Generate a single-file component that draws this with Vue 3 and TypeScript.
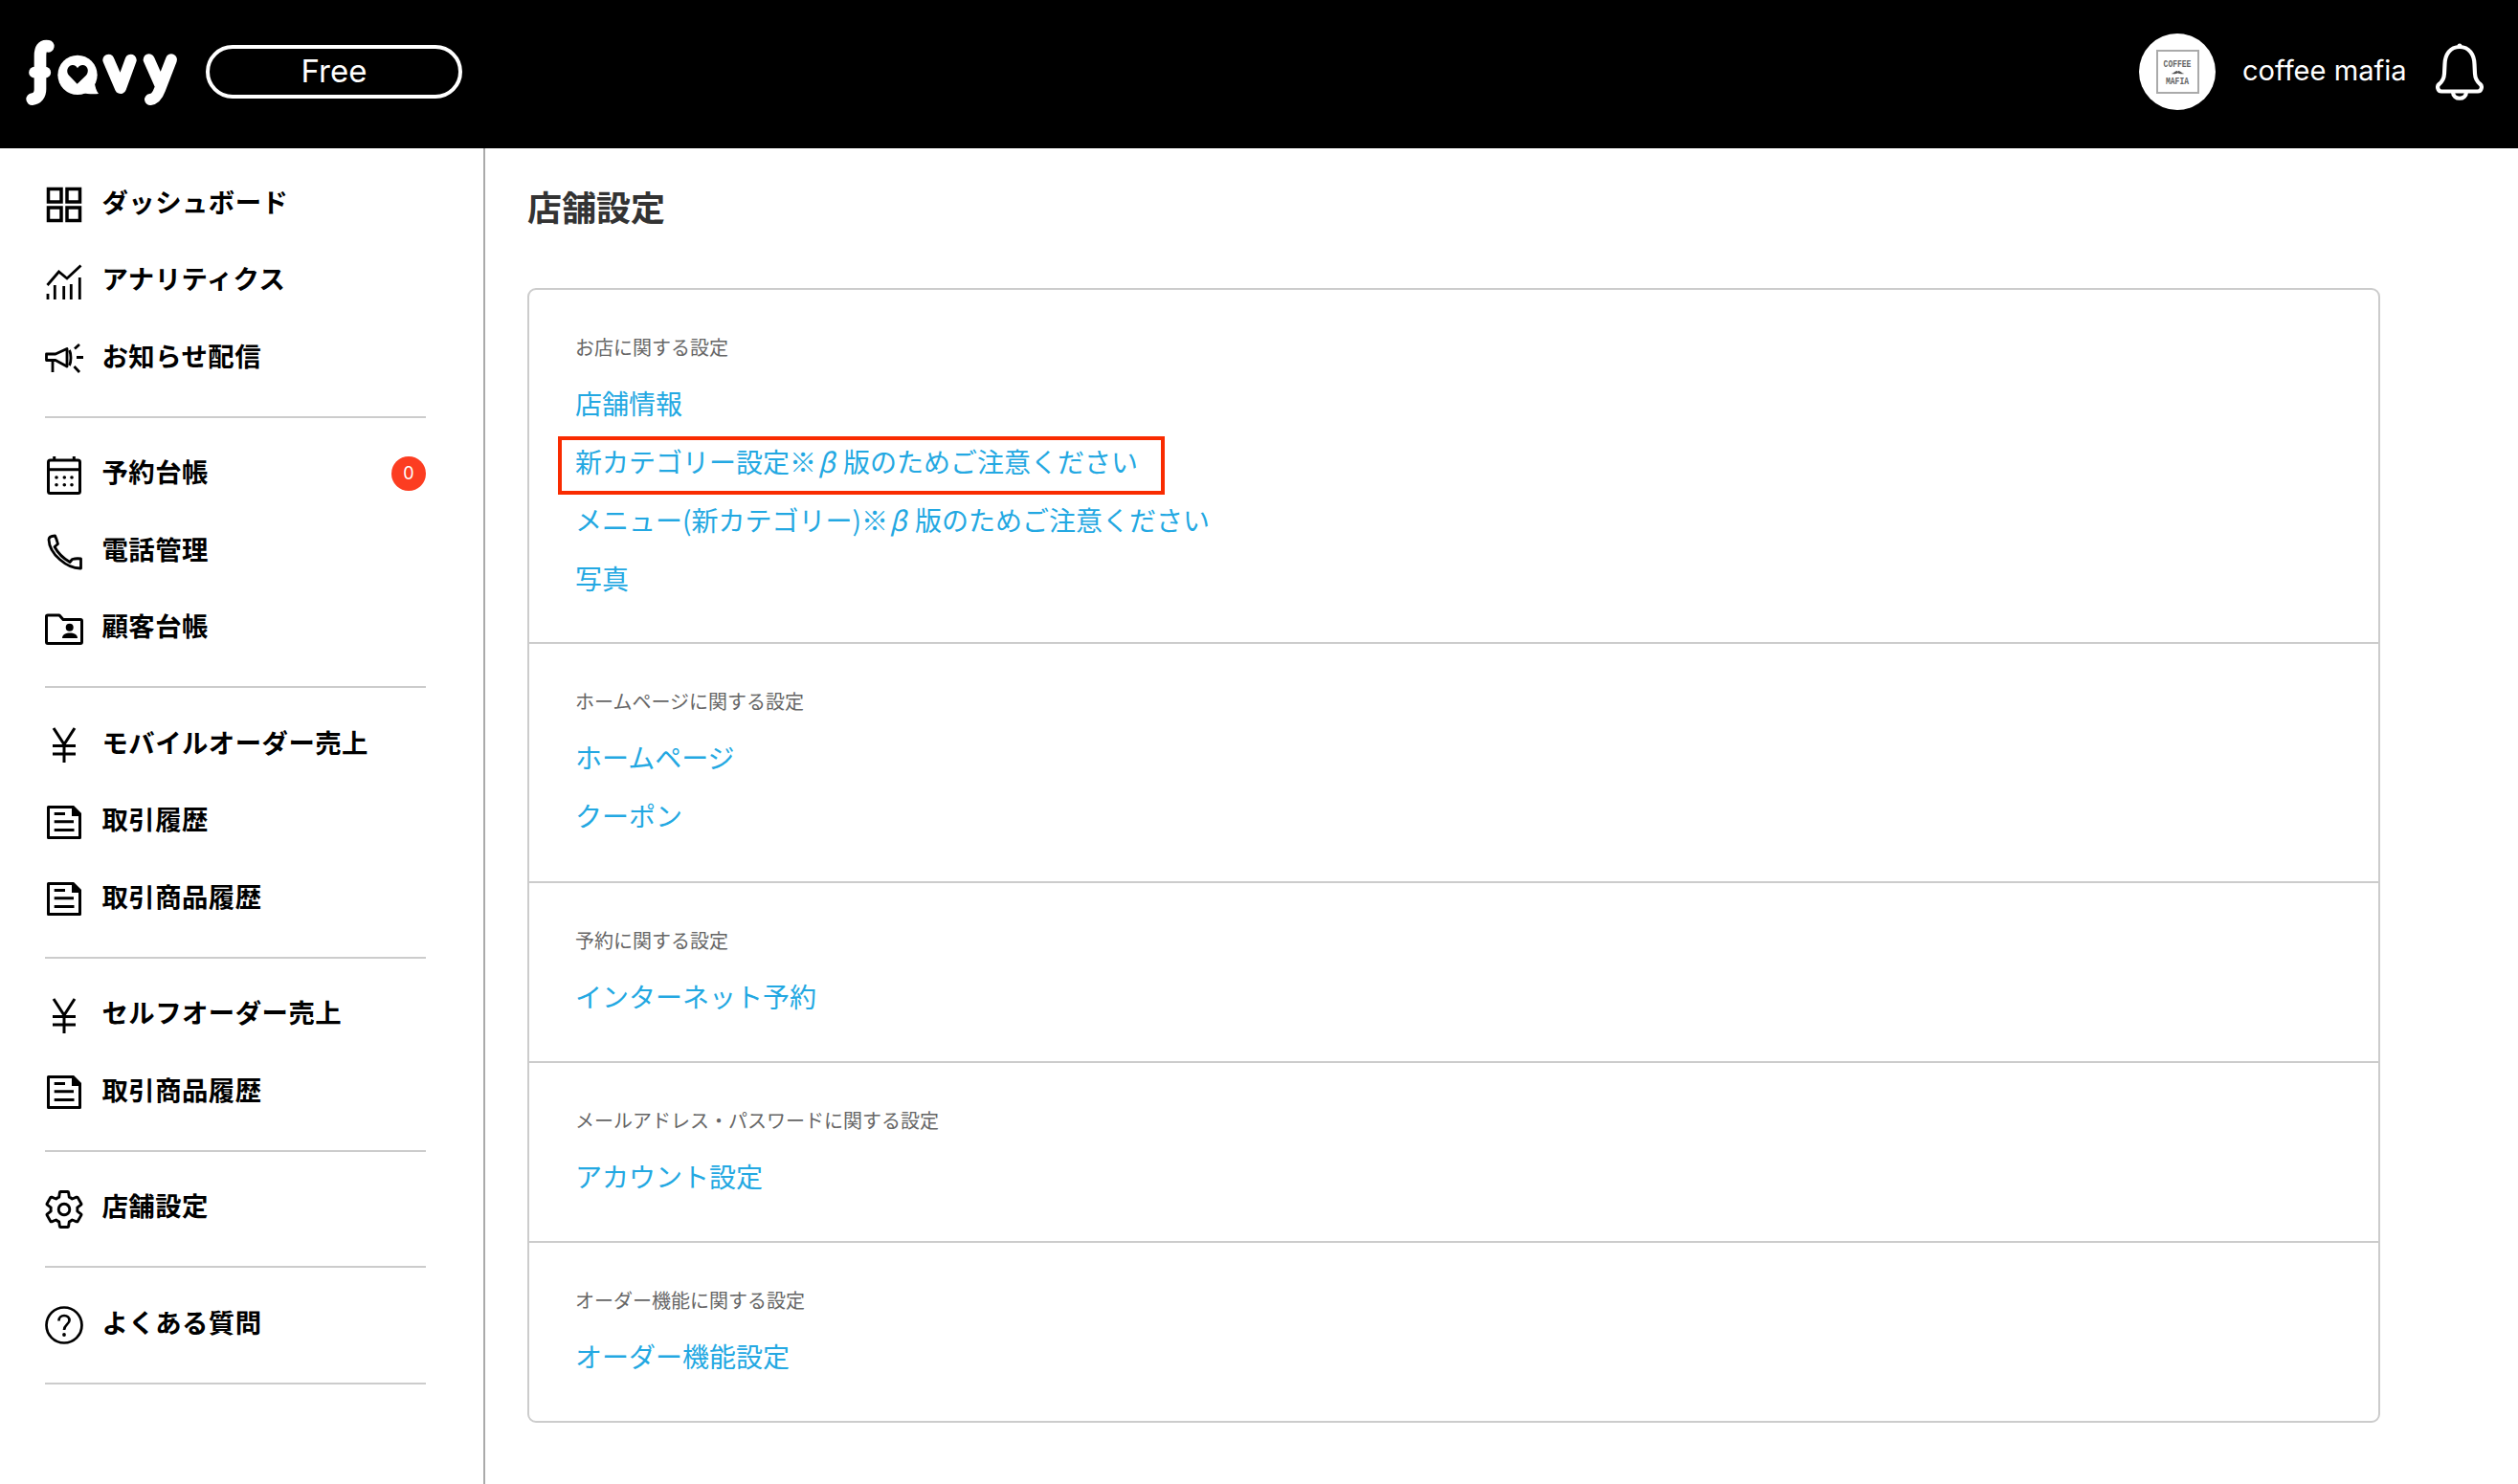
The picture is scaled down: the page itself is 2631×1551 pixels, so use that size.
<script setup lang="ts">
interface NavItem { label: string; icon: string; badge?: number }

const groups: NavItem[][] = [
  [
    { label: 'ダッシュボード', icon: 'grid' },
    { label: 'アナリティクス', icon: 'chart' },
    { label: 'お知らせ配信', icon: 'mega' },
  ],
  [
    { label: '予約台帳', icon: 'calendar', badge: 0 },
    { label: '電話管理', icon: 'phone' },
    { label: '顧客台帳', icon: 'folder' },
  ],
  [
    { label: 'モバイルオーダー売上', icon: 'yen' },
    { label: '取引履歴', icon: 'doc' },
    { label: '取引商品履歴', icon: 'doc' },
  ],
  [
    { label: 'セルフオーダー売上', icon: 'yen' },
    { label: '取引商品履歴', icon: 'doc' },
  ],
  [{ label: '店舗設定', icon: 'gear' }],
  [{ label: 'よくある質問', icon: 'help' }],
]

interface Section { title: string; links: { text: string; marked?: boolean }[] }

const sections: Section[] = [
  {
    title: 'お店に関する設定',
    links: [
      { text: '店舗情報' },
      { text: '新カテゴリー設定※β版のためご注意ください', marked: true },
      { text: 'メニュー(新カテゴリー)※β版のためご注意ください' },
      { text: '写真' },
    ],
  },
  { title: 'ホームページに関する設定', links: [{ text: 'ホームページ' }, { text: 'クーポン' }] },
  { title: '予約に関する設定', links: [{ text: 'インターネット予約' }] },
  { title: 'メールアドレス・パスワードに関する設定', links: [{ text: 'アカウント設定' }] },
  { title: 'オーダー機能に関する設定', links: [{ text: 'オーダー機能設定' }] },
]
</script>

<template>
  <div class="page">
    <header class="topbar">
      <div class="brand">
        <svg class="logo" viewBox="0 0 540 270" width="180" height="90" aria-label="favy">
          <g fill="none" stroke="#fff" stroke-linecap="round" stroke-linejoin="round">
            <path stroke-width="38" d="M91 55C72 52 66 64 66 85V190C66 208 56 220 41 221" />
            <path stroke-width="35" d="M48 137H82" />
            <path stroke-width="36" d="M280 98L318 186L350 98" />
            <path stroke-width="36" d="M407 97L442 176M477 97L441 190C433 212 425 220 411 222" />
          </g>
          <circle cx="183" cy="145" r="62" fill="#fff" />
          <path fill="#fff" d="M236 165C238 182 241 194 249 204C232 206 214 205 196 200Z" />
          <path fill="#000" d="M182 173L156 146C146 135 151 116 166 114C174 113 180 118 183 124C186 118 193 113 201 114C216 116 220 135 210 146Z" />
        </svg>
        <div class="plan"><span class="plan-text">Free</span></div>
      </div>
      <div class="account">
        <div class="avatar">
          <div class="avatar-mark">
            <span>COFFEE</span>
            <svg viewBox="0 0 20 6" width="15" height="5">
              <path fill="#555" d="M1 5C4 5 6 1 9 1L10 2L11 1C14 1 16 5 19 5C15 6 12 5 10 4C8 5 5 6 1 5Z" />
            </svg>
            <span>MAFIA</span>
          </div>
        </div>
        <span class="account-name">coffee mafia</span>
        <svg class="bell" viewBox="0 0 50 60" width="50" height="60" fill="none" stroke="#fff" stroke-width="4.2">
          <path stroke-linejoin="round" d="M25 4C15 4 9.8 12 9.5 22L9 32C8.7 38 6 41 3.5 43C1 45 2 50.5 6 50.5H44C48 50.5 49 45 46.5 43C44 41 41.3 38 41 32L40.5 22C40.2 12 35 4 25 4Z" />
          <path d="M18 51C18 60 32 60 32 51" />
          <circle cx="25" cy="3" r="2.5" fill="#fff" stroke="none" />
        </svg>
      </div>
    </header>

    <div class="body">
      <nav class="sidebar">
        <div v-for="(group, gi) in groups" :key="gi" class="group">
          <a v-for="item in group" :key="item.label" class="item">
            <svg class="icon" viewBox="0 0 40 40" width="40" height="40" fill="none" stroke="#000" stroke-width="3">
              <template v-if="item.icon === 'grid'">
                <g stroke-width="3.5">
                  <rect x="3.5" y="3.5" width="13.5" height="13.5" />
                  <rect x="23" y="3.5" width="13.5" height="13.5" />
                  <rect x="3.5" y="23" width="13.5" height="13.5" />
                  <rect x="23" y="23" width="13.5" height="13.5" />
                </g>
              </template>
              <template v-else-if="item.icon === 'chart'">
                <path stroke-width="2.8" d="M2.5 23L14.5 9L23 16L37.5 2.5" />
                <path stroke-width="2.8" d="M3 32V38M10.3 23V38M19.7 24V38M27.3 22V38M36.3 15V38" />
              </template>
              <template v-else-if="item.icon === 'mega'">
                <path stroke-width="2.8" stroke-linejoin="round" d="M1.5 15H11L23 9.5V28L11 21.5H1.5Z" />
                <path stroke-width="2.8" d="M8 21.5V34M25.5 11C27.5 15 27.5 23 25.5 27M31 9.5L36 5M33 18.5H40M30.5 28L36 34" />
              </template>
              <template v-else-if="item.icon === 'calendar'">
                <rect x="3.5" y="4" width="33" height="34.5" rx="2" stroke-width="3" />
                <path stroke-width="3" d="M3.5 13.7H36.5M9.7 0V4M30.3 0V4" />
                <g fill="#000" stroke="none">
                  <circle cx="12" cy="22" r="1.8" /><circle cx="20.3" cy="22" r="1.8" /><circle cx="28" cy="22" r="1.8" />
                  <circle cx="12" cy="29.7" r="1.8" /><circle cx="20.3" cy="29.7" r="1.8" /><circle cx="28" cy="29.7" r="1.8" />
                </g>
              </template>
              <template v-else-if="item.icon === 'phone'">
                <path stroke-width="2.8" stroke-linejoin="round" d="M4 7C4 4.5 6 3.2 10.5 3C12 6 13 9.5 13.5 11.5L10 14.5C13.5 21 19 26.5 26 30.5L28.5 27.5C31 26.8 34 26.5 37.5 27V37C23 37.5 4.5 22 4 7Z" />
              </template>
              <template v-else-if="item.icon === 'folder'">
                <path stroke-width="3" stroke-linejoin="round" d="M1.5 6C1.5 5.3 2 5 3 5H15L19 9.5H37C38 9.5 38.5 10 38.5 11V33C38.5 34 38 34.5 37 34.5H3C2 34.5 1.500 34 1.5 33Z" />
                <circle cx="25.7" cy="17.8" r="4" fill="#000" stroke="none" />
                <path fill="#000" stroke="none" d="M18 29C18 25 22 23.5 26 23.5C30 23.5 34 25 34 29Z" />
              </template>
              <template v-else-if="item.icon === 'yen'">
                <path stroke-width="3" d="M9 2L20 19L31 2M20 19V38M8 20.5H32M8 29H32" />
              </template>
              <template v-else-if="item.icon === 'doc'">
                <path stroke-width="3" stroke-linejoin="round" d="M3.5 3.5H29L36.5 11V35.5H3.5Z" />
                <path fill="#000" stroke="none" d="M28 2H30L38 10V13H28Z" />
                <path stroke-width="3" d="M9.7 10.5H21M9.7 18.8H30M9.7 27.5H30.5" />
              </template>
              <template v-else-if="item.icon === 'gear'">
                <g transform="translate(-2.2 -2.2) scale(1.85)">
                  <path stroke-width="1.55" stroke-linejoin="round" d="M19.43 12.98c.04-.32.07-.64.07-.98 0-.34-.03-.66-.07-.98l2.11-1.65c.19-.15.24-.42.12-.64l-2-3.46c-.09-.16-.26-.25-.44-.25-.06 0-.12.01-.17.03l-2.49 1c-.52-.4-1.08-.73-1.69-.98l-.38-2.65C14.46 2.18 14.25 2 14 2h-4c-.25 0-.46.18-.49.42l-.38 2.65c-.61.25-1.17.59-1.69.98l-2.49-1c-.06-.02-.12-.03-.18-.03-.17 0-.34.09-.43.25l-2 3.46c-.13.22-.07.49.12.64l2.11 1.65c-.04.32-.07.65-.07.98 0 .33.03.66.07.98l-2.11 1.65c-.19.15-.24.42-.12.64l2 3.46c.09.16.26.25.44.25.06 0 .12-.01.17-.03l2.49-1c.52.4 1.08.73 1.69.98l.38 2.65c.03.24.24.42.49.42h4c.25 0 .46-.18.49-.42l.38-2.65c.61-.25 1.17-.59 1.69-.98l2.49 1c.06.02.12.03.18.03.17 0 .34-.09.43-.25l2-3.46c.12-.22.07-.49-.12-.64l-2.11-1.65z" />
                </g>
                <circle cx="20" cy="20" r="5.8" stroke-width="2.9" />
              </template>
              <template v-else-if="item.icon === 'help'">
                <circle cx="20" cy="20" r="18.5" stroke-width="2.7" />
                <path stroke-width="2.7" d="M14.5 15.5C14.5 12 17 10 20 10C23.5 10 25.5 12.5 25.5 15C25.5 19 20 19.5 20 25" />
                <circle cx="20" cy="30" r="1.9" fill="#000" stroke="none" />
              </template>
            </svg>
            <span class="item-label">{{ item.label }}</span>
            <span v-if="item.badge !== undefined" class="badge">{{ item.badge }}</span>
          </a>
          <div class="divider"></div>
        </div>
      </nav>

      <main class="main">
        <h1 class="title">店舗設定</h1>
        <div class="card">
          <section v-for="s in sections" :key="s.title" class="section">
            <div class="section-title">{{ s.title }}</div>
            <div v-for="l in s.links" :key="l.text" class="link-row">
              <a class="link">
                <template v-for="(part, pi) in l.text.split('β')" :key="pi">
                  <span v-if="pi > 0" class="beta">β</span>{{ part }}
                </template>
              </a>
              <span v-if="l.marked" class="mark"></span>
            </div>
          </section>
        </div>
      </main>
    </div>
  </div>
</template>

<style>
html, body { margin: 0; background: #fff; overflow: hidden; }
</style>

<style scoped>
.page {
  width: 2631px;
  height: 1551px;
  display: flex;
  flex-direction: column;
  font-family: "Noto Sans CJK JP", "Noto Sans", sans-serif;
  overflow: hidden;
}
.topbar {
  height: 155px;
  flex: none;
  background: #000;
  color: #fff;
  display: flex;
  align-items: center;
  justify-content: space-between;
  padding: 0 36px 5px 20px;
  box-sizing: border-box;
}
.brand { display: flex; align-items: center; }
.logo { display: block; }
.plan {
  width: 268px;
  height: 56px;
  margin-left: 15px;
  box-sizing: border-box;
  border: 4px solid #fff;
  border-radius: 28px;
  display: flex;
  align-items: center;
  justify-content: center;
  font: 400 33px "Inter", sans-serif;
}
.plan-text { margin-top: -3px; }
.account { display: flex; align-items: center; }
.avatar {
  width: 80px;
  height: 80px;
  border-radius: 50%;
  background: #fff;
  display: flex;
  align-items: center;
  justify-content: center;
}
.avatar-mark {
  width: 45px;
  height: 46px;
  box-sizing: border-box;
  border: 2px solid #aaa;
  display: flex;
  flex-direction: column;
  align-items: center;
  justify-content: center;
  gap: 2px;
  font: 700 8px/9px "Liberation Mono", monospace;
  color: #666;
}
.avatar-mark span { display: block; transform: scaleY(1.4); }
.avatar-mark svg { display: block; }
.account-name {
  margin-left: 28px;
  margin-top: -4px;
  width: 202px;
  font: 400 29.1px "Inter", sans-serif;
  white-space: nowrap;
}
.bell { display: block; }

.body { flex: 1; display: flex; min-height: 0; }
.sidebar {
  width: 507px;
  flex: none;
  box-sizing: border-box;
  padding: 16px 60px 0 47px;
  border-right: 2px solid #aaa;
}
.item {
  height: 80.5px;
  display: flex;
  align-items: center;
  color: #000;
}
.icon { flex: none; margin-top: 6px; margin-right: 19.5px; display: block; }
.item-label { font-size: 27.4px; font-weight: 700; letter-spacing: .45px; white-space: nowrap; margin-top: -3px; }
.badge {
  margin-left: auto;
  width: 36px;
  height: 36px;
  border-radius: 50%;
  background: #fc3d21;
  color: #fff;
  font: 400 18px "Inter", sans-serif;
  display: flex;
  align-items: center;
  justify-content: center;
  margin-top: 2px;
}
.divider { height: 2px; background: #ccc; margin: 22px 0 17px; }

.main { flex: 1; min-width: 0; padding: 40px 0 0 44px; box-sizing: border-box; }
.title {
  margin: 0 0 65px;
  font-size: 36px;
  line-height: 41px;
  font-weight: 700;
  color: #333;
}
.card {
  width: 1936px;
  box-sizing: border-box;
  border: 2px solid #ccc;
  border-radius: 9px;
}
.section { padding: 41px 48px 36px; border-bottom: 2px solid #ccc; }
.section:first-child { padding-bottom: 35px; }
.section:nth-child(2) { padding-bottom: 37px; }
.section:last-child { border-bottom: 0; }
.section-title { font-size: 20px; line-height: 38px; color: #666; margin-bottom: 10px; }
.link-row { position: relative; height: 61px; display: flex; align-items: center; }
.link { font-size: 28px; line-height: 61px; color: #23a8e2; white-space: nowrap; margin-top: -3px; }
.beta { display: inline-block; box-sizing: border-box; width: 1em; padding-right: 7px; text-align: center; font-style: italic; }
.mark {
  position: absolute;
  left: -18px;
  top: 3px;
  width: 634px;
  height: 61px;
  box-sizing: border-box;
  border: 4px solid #f92b00;
  pointer-events: none;
}
</style>
